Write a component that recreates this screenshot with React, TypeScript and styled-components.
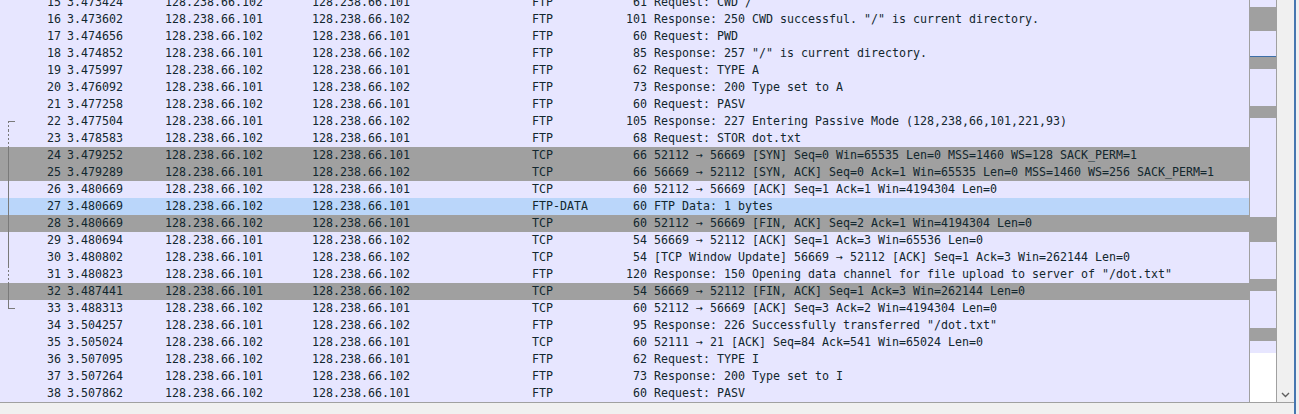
import React from "react";
import styled, { createGlobalStyle, css } from "styled-components";

const Global = createGlobalStyle`
  html, body { margin: 0; padding: 0; background: #f0f0f0; overflow: hidden; }
  #root { width: 1299px; height: 414px; }
`;

type Tone = "normal" | "gray" | "blue";
type Rel = "none" | "first" | "solid" | "dashed" | "last";

interface Packet {
  no: number;
  time: string;
  src: string;
  dst: string;
  proto: string;
  len: number;
  info: string;
  tone: Tone;
  rel: Rel;
}

const A = "128.238.66.101";
const B = "128.238.66.102";

const packets: Packet[] = [
  { no: 15, time: "3.473424", src: B, dst: A, proto: "FTP", len: 61, info: "Request: CWD /", tone: "normal", rel: "none" },
  { no: 16, time: "3.473602", src: A, dst: B, proto: "FTP", len: 101, info: 'Response: 250 CWD successful. "/" is current directory.', tone: "normal", rel: "none" },
  { no: 17, time: "3.474656", src: B, dst: A, proto: "FTP", len: 60, info: "Request: PWD", tone: "normal", rel: "none" },
  { no: 18, time: "3.474852", src: A, dst: B, proto: "FTP", len: 85, info: 'Response: 257 "/" is current directory.', tone: "normal", rel: "none" },
  { no: 19, time: "3.475997", src: B, dst: A, proto: "FTP", len: 62, info: "Request: TYPE A", tone: "normal", rel: "none" },
  { no: 20, time: "3.476092", src: A, dst: B, proto: "FTP", len: 73, info: "Response: 200 Type set to A", tone: "normal", rel: "none" },
  { no: 21, time: "3.477258", src: B, dst: A, proto: "FTP", len: 60, info: "Request: PASV", tone: "normal", rel: "none" },
  { no: 22, time: "3.477504", src: A, dst: B, proto: "FTP", len: 105, info: "Response: 227 Entering Passive Mode (128,238,66,101,221,93)", tone: "normal", rel: "first" },
  { no: 23, time: "3.478583", src: B, dst: A, proto: "FTP", len: 68, info: "Request: STOR dot.txt", tone: "normal", rel: "dashed" },
  { no: 24, time: "3.479252", src: B, dst: A, proto: "TCP", len: 66, info: "52112 \u2192 56669 [SYN] Seq=0 Win=65535 Len=0 MSS=1460 WS=128 SACK_PERM=1", tone: "gray", rel: "solid" },
  { no: 25, time: "3.479289", src: A, dst: B, proto: "TCP", len: 66, info: "56669 \u2192 52112 [SYN, ACK] Seq=0 Ack=1 Win=65535 Len=0 MSS=1460 WS=256 SACK_PERM=1", tone: "gray", rel: "solid" },
  { no: 26, time: "3.480669", src: B, dst: A, proto: "TCP", len: 60, info: "52112 \u2192 56669 [ACK] Seq=1 Ack=1 Win=4194304 Len=0", tone: "normal", rel: "solid" },
  { no: 27, time: "3.480669", src: B, dst: A, proto: "FTP-DATA", len: 60, info: "FTP Data: 1 bytes", tone: "blue", rel: "solid" },
  { no: 28, time: "3.480669", src: B, dst: A, proto: "TCP", len: 60, info: "52112 \u2192 56669 [FIN, ACK] Seq=2 Ack=1 Win=4194304 Len=0", tone: "gray", rel: "solid" },
  { no: 29, time: "3.480694", src: A, dst: B, proto: "TCP", len: 54, info: "56669 \u2192 52112 [ACK] Seq=1 Ack=3 Win=65536 Len=0", tone: "normal", rel: "solid" },
  { no: 30, time: "3.480802", src: A, dst: B, proto: "TCP", len: 54, info: "[TCP Window Update] 56669 \u2192 52112 [ACK] Seq=1 Ack=3 Win=262144 Len=0", tone: "normal", rel: "solid" },
  { no: 31, time: "3.480823", src: A, dst: B, proto: "FTP", len: 120, info: 'Response: 150 Opening data channel for file upload to server of "/dot.txt"', tone: "normal", rel: "dashed" },
  { no: 32, time: "3.487441", src: A, dst: B, proto: "TCP", len: 54, info: "56669 \u2192 52112 [FIN, ACK] Seq=1 Ack=3 Win=262144 Len=0", tone: "gray", rel: "solid" },
  { no: 33, time: "3.488313", src: B, dst: A, proto: "TCP", len: 60, info: "52112 \u2192 56669 [ACK] Seq=3 Ack=2 Win=4194304 Len=0", tone: "normal", rel: "last" },
  { no: 34, time: "3.504257", src: A, dst: B, proto: "FTP", len: 95, info: 'Response: 226 Successfully transferred "/dot.txt"', tone: "normal", rel: "none" },
  { no: 35, time: "3.505024", src: B, dst: A, proto: "TCP", len: 60, info: "52111 \u2192 21 [ACK] Seq=84 Ack=541 Win=65024 Len=0", tone: "normal", rel: "none" },
  { no: 36, time: "3.507095", src: B, dst: A, proto: "FTP", len: 62, info: "Request: TYPE I", tone: "normal", rel: "none" },
  { no: 37, time: "3.507264", src: A, dst: B, proto: "FTP", len: 73, info: "Response: 200 Type set to I", tone: "normal", rel: "none" },
  { no: 38, time: "3.507862", src: B, dst: A, proto: "FTP", len: 60, info: "Request: PASV", tone: "normal", rel: "none" },
];

const toneBg: Record<Tone, string> = {
  normal: "#e7e6ff",
  gray: "#a0a0a0",
  blue: "#bad6fa",
};

const Frame = styled.div`
  display: flex;
  width: 1299px;
  height: 414px;
  background: #f0f0f0;
`;

const Pane = styled.div`
  display: flex;
  flex-direction: column;
  width: 1294px;
  height: 414px;
`;

const TopArea = styled.div`
  display: flex;
  height: 402px;
`;

const PacketList = styled.div`
  width: 1249px;
  height: 402px;
  overflow: hidden;
  background: #e7e6ff;
  font-family: "DejaVu Sans Mono", "Liberation Mono", monospace;
  font-size: 11.63px;
  line-height: 17px;
  color: #12272e;
`;

const Rows = styled.div`
  margin-top: -6px;
`;

const Row = styled.div<{ $tone: Tone }>`
  display: grid;
  grid-template-columns: 64px 98px 147px 220px 61px 61px 1fr;
  height: 17px;
  background: ${(p) => toneBg[p.$tone]};
  white-space: pre;
`;

const Cell = styled.div<{ $align?: "left" | "right" }>`
  overflow: hidden;
  ${(p) =>
    p.$align === "right"
      ? css`
          text-align: right;
          padding-right: 3px;
        `
      : css`
          padding-left: 3px;
        `}
`;

const LengthCell = styled(Cell)`
  padding-right: 4px;
`;

const NoCell = styled.div`
  display: flex;
  align-items: stretch;
  padding-right: 3px;
`;

const NoText = styled.span`
  flex: 1;
  text-align: right;
`;

const RelSvg = styled.svg`
  display: block;
  width: 16px;
  height: 17px;
  flex: none;
`;

const RelMark: React.FC<{ rel: Rel }> = ({ rel }) => {
  const stroke = "#7a7a7a";
  return (
    <RelSvg viewBox="0 0 16 17" shapeRendering="crispEdges">
      {rel === "first" && (
        <>
          <line x1="8.5" y1="8.5" x2="15" y2="8.5" stroke={stroke} />
          <line x1="8.5" y1="8" x2="8.5" y2="17" stroke={stroke} strokeDasharray="2 2" />
        </>
      )}
      {rel === "dashed" && <line x1="8.5" y1="0" x2="8.5" y2="17" stroke={stroke} strokeDasharray="2 2" />}
      {rel === "solid" && <line x1="8.5" y1="0" x2="8.5" y2="17" stroke={stroke} />}
      {rel === "last" && (
        <>
          <line x1="8.5" y1="0" x2="8.5" y2="9" stroke={stroke} />
          <line x1="8.5" y1="8.5" x2="15" y2="8.5" stroke={stroke} />
        </>
      )}
    </RelSvg>
  );
};

const Minimap = styled.div`
  width: 26px;
  height: 402px;
  border-left: 1px solid #a0a0a0;
  border-right: 1px solid #a0a0a0;
  background: #ffffff;
`;

const MiniSvg = styled.svg`
  display: block;
  width: 26px;
  height: 402px;
`;

const miniSegments: { y: number; h: number; c: string }[] = [
  { y: 0, h: 7, c: "#e7e6ff" },
  { y: 7, h: 24, c: "#a0a0a0" },
  { y: 31, h: 25, c: "#e7e6ff" },
  { y: 56, h: 1, c: "#3d6fa9" },
  { y: 57, h: 12, c: "#a0a0a0" },
  { y: 69, h: 37, c: "#e7e6ff" },
  { y: 106, h: 12, c: "#a0a0a0" },
  { y: 118, h: 99, c: "#e7e6ff" },
  { y: 217, h: 25, c: "#a0a0a0" },
  { y: 242, h: 37, c: "#e7e6ff" },
  { y: 279, h: 12, c: "#a0a0a0" },
  { y: 291, h: 37, c: "#e7e6ff" },
  { y: 328, h: 13, c: "#a0a0a0" },
  { y: 341, h: 12, c: "#e7e6ff" },
];

const VScroll = styled.div`
  width: 17px;
  height: 402px;
  background: #f0f0f0;
  display: flex;
  flex-direction: column;
  justify-content: flex-end;
  align-items: center;
  padding-bottom: 4px;
  box-sizing: border-box;
`;

const Chevron = styled.svg`
  display: block;
  width: 9px;
  height: 6px;
`;

const Divider = styled.div`
  height: 1px;
  background: #a0a0a0;
`;

const BottomGap = styled.div`
  flex: 1;
  background: #f0f0f0;
`;

const FocusLine = styled.div`
  width: 2px;
  height: 414px;
  background: #4677b0;
`;

const Edge = styled.div`
  flex: 1;
  background: #f0f0f0;
`;

export default function App() {
  return (
    <>
      <Global />
      <Frame>
        <Pane>
          <TopArea>
            <PacketList>
              <Rows>
                {packets.map((p) => (
                  <Row key={p.no} $tone={p.tone}>
                    <NoCell>
                      <RelMark rel={p.rel} />
                      <NoText>{p.no}</NoText>
                    </NoCell>
                    <Cell>{p.time}</Cell>
                    <Cell>{p.src}</Cell>
                    <Cell>{p.dst}</Cell>
                    <Cell>{p.proto}</Cell>
                    <LengthCell $align="right">{p.len}</LengthCell>
                    <Cell>{p.info}</Cell>
                  </Row>
                ))}
              </Rows>
            </PacketList>
            <Minimap>
              <MiniSvg viewBox="0 0 26 402" shapeRendering="crispEdges">
                {miniSegments.map((s) => (
                  <rect key={s.y} x={0} y={s.y} width={26} height={s.h} fill={s.c} />
                ))}
              </MiniSvg>
            </Minimap>
            <VScroll>
              <Chevron viewBox="0 0 9 6">
                <polyline points="1,1 4.5,4.5 8,1" fill="none" stroke="#5f5f5f" strokeWidth="1.4" />
              </Chevron>
            </VScroll>
          </TopArea>
          <Divider />
          <BottomGap />
        </Pane>
        <FocusLine />
        <Edge />
      </Frame>
    </>
  );
}
